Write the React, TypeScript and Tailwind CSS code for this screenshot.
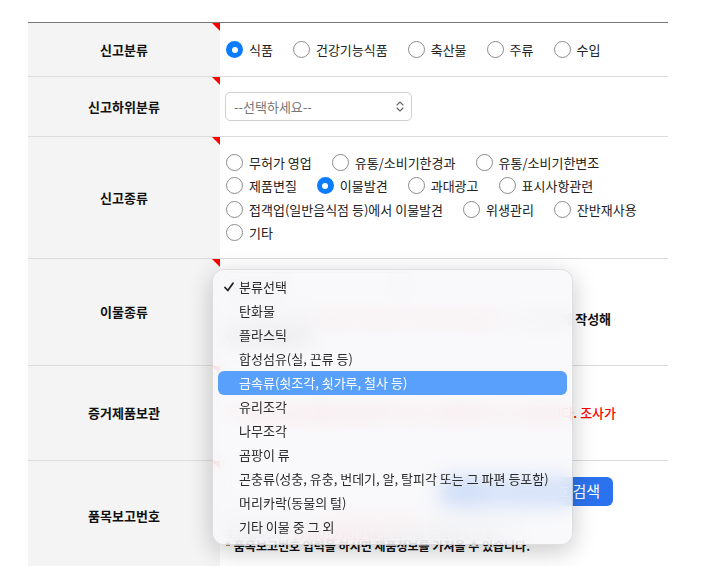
import type { ReactNode } from 'react'

const FONT = "font-['Noto_Sans_CJK_KR','Noto_Sans',sans-serif]"

const ITEMS = [
  '분류선택',
  '탄화물',
  '플라스틱',
  '합성섬유(실, 끈류 등)',
  '금속류(쇳조각, 쇳가루, 철사 등)',
  '유리조각',
  '나무조각',
  '곰팡이 류',
  '곤충류(성충, 유충, 번데기, 알, 탈피각 또는 그 파편 등포함)',
  '머리카락(동물의 털)',
  '기타 이물 중 그 외',
]

function Radio({ checked }: { checked?: boolean }) {
  if (checked) {
    return (
      <span className="flex h-[17px] w-[17px] shrink-0 items-center justify-center rounded-full bg-[#0b7bff]">
        <span className="h-[6px] w-[6px] rounded-full bg-white" />
      </span>
    )
  }
  return <span className="h-[17px] w-[17px] shrink-0 rounded-full border-[1.5px] border-[#8c8c8c] bg-white" />
}

function Option({ label, checked }: { label: string; checked?: boolean }) {
  return (
    <label className="mr-[20px] flex items-center gap-[6px] text-[#222]">
      <Radio checked={checked} />
      <span>{label}</span>
    </label>
  )
}

function Row({ label, height, children, className = '' }: { label: string; height: string; children: ReactNode; className?: string }) {
  return (
    <div className={`grid grid-cols-[192px_1fr] border-b border-[#dcdcdc] ${height}`}>
      <div className="relative flex items-center justify-center bg-[#f4f4f4] text-[13px] font-bold text-[#111]">
        {label}
        <svg className="absolute right-0 top-0" width="8" height="8" viewBox="0 0 8 8">
          <polygon points="0,0 8,0 8,8" fill="#ff0000" />
        </svg>
      </div>
      <div className={`pl-[6px] ${className}`}>{children}</div>
    </div>
  )
}

function SelectBox({ text }: { text: string }) {
  return (
    <div className="flex h-[29px] w-[187px] items-center justify-between rounded-[5px] border border-[#cfcfcf] bg-white pl-[8px] pr-[7px] text-[#777]">
      <span>{text}</span>
      <svg width="8" height="11" viewBox="0 0 8 11" fill="none" stroke="#666" strokeWidth="1.1" strokeLinecap="round" strokeLinejoin="round">
        <polyline points="1,4 4,1 7,4" />
        <polyline points="1,7 4,10 7,7" />
      </svg>
    </div>
  )
}

export default function App() {
  return (
    <div className={`relative h-[566px] w-[720px] overflow-hidden bg-white pt-[22px] text-[13px] ${FONT}`}>
      <div className="ml-[28px] w-[640px] border-t border-[#777]">
        <Row label="신고분류" height="h-[54px]" className="flex items-center">
          <Option label="식품" checked />
          <Option label="건강기능식품" />
          <Option label="축산물" />
          <Option label="주류" />
          <Option label="수입" />
        </Row>

        <Row label="신고하위분류" height="h-[60px]" className="flex items-center !pl-[5px]">
          <SelectBox text="--선택하세요--" />
        </Row>

        <Row label="신고종류" height="h-[122px]" className="flex flex-wrap content-center gap-y-[4px]">
          <Option label="무허가 영업" />
          <Option label="유통/소비기한경과" />
          <Option label="유통/소비기한변조" />
          <Option label="제품변질" />
          <Option label="이물발견" checked />
          <Option label="과대광고" />
          <Option label="표시사항관련" />
          <Option label="접객업(일반음식점 등)에서 이물발견" />
          <Option label="위생관리" />
          <Option label="잔반재사용" />
          <Option label="기타" />
        </Row>

        <Row label="이물종류" height="h-[107px]" className="flex flex-col justify-start gap-[8px] pt-[13px] !pl-[5px]">
          <SelectBox text="분류선택" />
          <p className="whitespace-nowrap leading-[19px] text-[#888]">
            ※ 이물의 종류를 <span className="text-[#ff2a2a]">정확히 선택하신 후에 상세 내용은</span> 신고내용란에{' '}
            <b className="text-[#111]">작성해</b>
            <br />
            <b className="text-[#111]">주시기 바랍니다.</b>
          </p>
        </Row>

        <Row label="증거제품보관" height="h-[95px]" className="flex flex-col justify-center leading-[18px]">
          <p className="whitespace-nowrap font-medium text-[#f00]">
            ※ 이물 등 증거제품은 폐기하지 마시고 보관하여 주시기 바랍니다. 조사가
          </p>
        </Row>

        <Row label="품목보고번호" height="h-[110px]" className="flex flex-col pt-[16px] !pl-[5px]">
          <div className="flex items-center gap-[10px]">
            <div className="h-[29px] w-[205px] rounded-[5px] border border-[#cfcfcf] bg-white" />
            <button className="h-[29px] w-[173px] rounded-[6px] bg-[#2b73ee] pr-[13px] text-right text-[15px] text-white">
              품목보고번호 검색
            </button>
          </div>
          <p className="mt-[8px] text-[12px] leading-[14px] text-[#999]">
            품목보고번호 예시 : <span className="text-[#ff3b3b]">19950123012345</span> (식품 품목제조보고)
          </p>
          <p className="text-[12px] leading-[14px] text-[#999]">
            축산물 예시 : <span className="text-[#ff3b3b]">19950123012345</span> (축산물 품목제조보고)
          </p>
          <p className="mt-[-3px] text-[12px] font-bold leading-[14px] text-[#111]">
            * 품목보고번호 입력을 하시면 제품정보를 가져올 수 있습니다.
          </p>
        </Row>
      </div>

      <div className="absolute left-[212px] top-[269px] w-[361px] rounded-[12px] border border-black/10 bg-[#f8f8fa]/80 px-[5px] py-[5px] shadow-[0_6px_24px_rgba(0,0,0,0.22)] backdrop-blur-[10px]">
        {ITEMS.map((item, i) => {
          const active = i === 4
          return (
            <div
              key={item}
              className={`flex h-[24px] items-center whitespace-nowrap rounded-[6px] pl-[21px] text-[13px] ${
                active ? 'bg-[#58a0fb] text-white' : 'text-[#2a2a2a]'
              }`}
            >
              {i === 0 && (
                <svg className="-ml-[15px] mr-[5px]" width="10" height="10" viewBox="0 0 10 10" fill="none" stroke="#222" strokeWidth="1.8" strokeLinecap="round" strokeLinejoin="round">
                  <polyline points="1,5.5 3.8,8.5 9,1.3" />
                </svg>
              )}
              {item}
            </div>
          )
        })}
      </div>
    </div>
  )
}
